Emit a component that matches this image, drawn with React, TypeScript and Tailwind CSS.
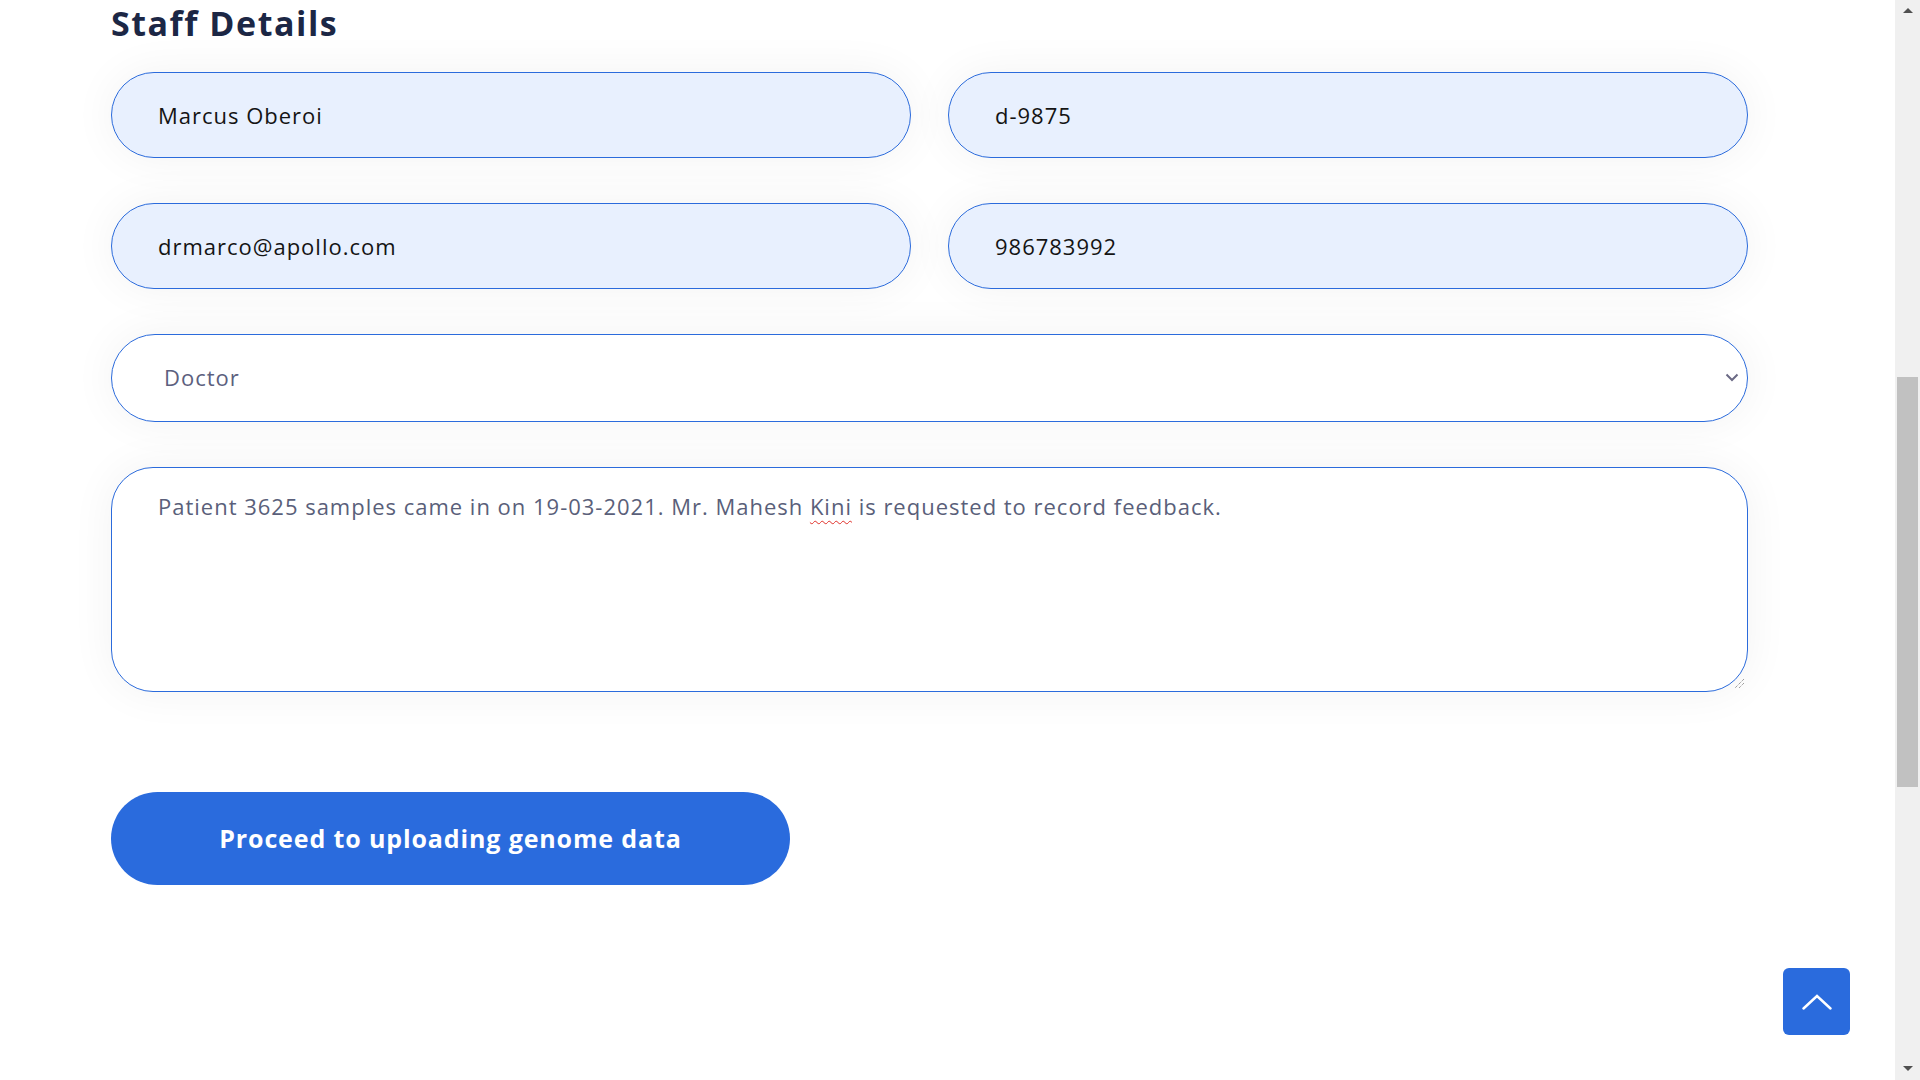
const fieldShadow = "shadow-[0_0_45px_rgba(0,0,0,0.055)]";

function Field({ value }: { value: string }) {
  return (
    <input
      readOnly
      defaultValue={value}
      className={`h-[86px] w-full rounded-full border border-[#2b6bdc] bg-[#e8f0fe] px-[46px] text-[22px] tracking-[0.045em] text-[#141414] outline-none ${fieldShadow}`}
    />
  );
}

function Scrollbar() {
  return (
    <div className="flex h-screen w-[25px] flex-col items-center bg-[#f0f0f0]">
      <div className="flex h-[17px] items-center justify-center pt-[4px]">
        <div className="h-0 w-0 border-x-[5px] border-b-[5px] border-x-transparent border-b-[#505050]" />
      </div>
      <div className="mt-[360px] h-[410px] w-[21px] bg-[#c1c1c1]" />
      <div className="flex-1" />
      <div className="flex h-[17px] items-center justify-center pb-[6px]">
        <div className="h-0 w-0 border-x-[5px] border-t-[5px] border-x-transparent border-t-[#505050]" />
      </div>
    </div>
  );
}

export default function App() {
  return (
    <div className="flex h-screen w-full overflow-hidden bg-white font-['Open_Sans',sans-serif]">
      <main className="relative flex-1 pl-[111px] pr-[147px]">
        <h2 className="pt-[3px] text-[34px] font-bold leading-[1.2] tracking-[0.045em] text-[#1c2745]">Staff Details</h2>

        <form className="mt-[28px] flex flex-col gap-[45px]">
          <div className="grid grid-cols-2 gap-x-[37px] gap-y-[45px]">
            <Field value="Marcus Oberoi" />
            <Field value="d-9875" />
            <Field value="drmarco@apollo.com" />
            <Field value="986783992" />
          </div>

          <div
            className={`flex h-[88px] items-center justify-between rounded-full border border-[#2b6bdc] bg-white pl-[52px] pr-[6px] text-[22px] tracking-[0.045em] text-[#5c5f7e] ${fieldShadow}`}
          >
            <span>Doctor</span>
            <svg width="14" height="9" viewBox="0 0 14 9" className="mr-[2px]">
              <path d="M1.5 1.5 L7 7 L12.5 1.5" fill="none" stroke="#6b6a85" strokeWidth="2" />
            </svg>
          </div>

          <div
            className={`relative h-[225px] rounded-[42px] border border-[#2b6bdc] bg-white px-[46px] pt-[22px] text-[22px] leading-[33px] tracking-[0.045em] text-[#5a5f7a] ${fieldShadow}`}
          >
            Patient 3625 samples came in on 19-03-2021. Mr. Mahesh{" "}
            <span className="underline decoration-[#e0302a] decoration-wavy decoration-1 underline-offset-[5px]">Kini</span>{" "}
            is requested to record feedback.
            <svg width="12" height="12" viewBox="0 0 12 12" className="absolute bottom-[2px] right-[2px]">
              <path d="M11 2 L2 11 M11 6 L6 11" stroke="#777" strokeWidth="1" strokeDasharray="1 1" />
            </svg>
          </div>
        </form>

        <button className="mt-[100px] h-[93px] w-[679px] rounded-full bg-[#2a6bdd] text-[25px] font-bold tracking-[0.035em] text-white">
          Proceed to uploading genome data
        </button>

        <button className="absolute left-[1783px] top-[968px] flex h-[67px] w-[67px] items-center justify-center rounded-[6px] bg-[#2a6bdd]">
          <svg width="30" height="16" viewBox="0 0 30 16">
            <path d="M1.5 14.5 L15 2 L28.5 14.5" fill="none" stroke="white" strokeWidth="2.4" strokeLinecap="round" />
          </svg>
        </button>
      </main>
      <Scrollbar />
    </div>
  );
}
